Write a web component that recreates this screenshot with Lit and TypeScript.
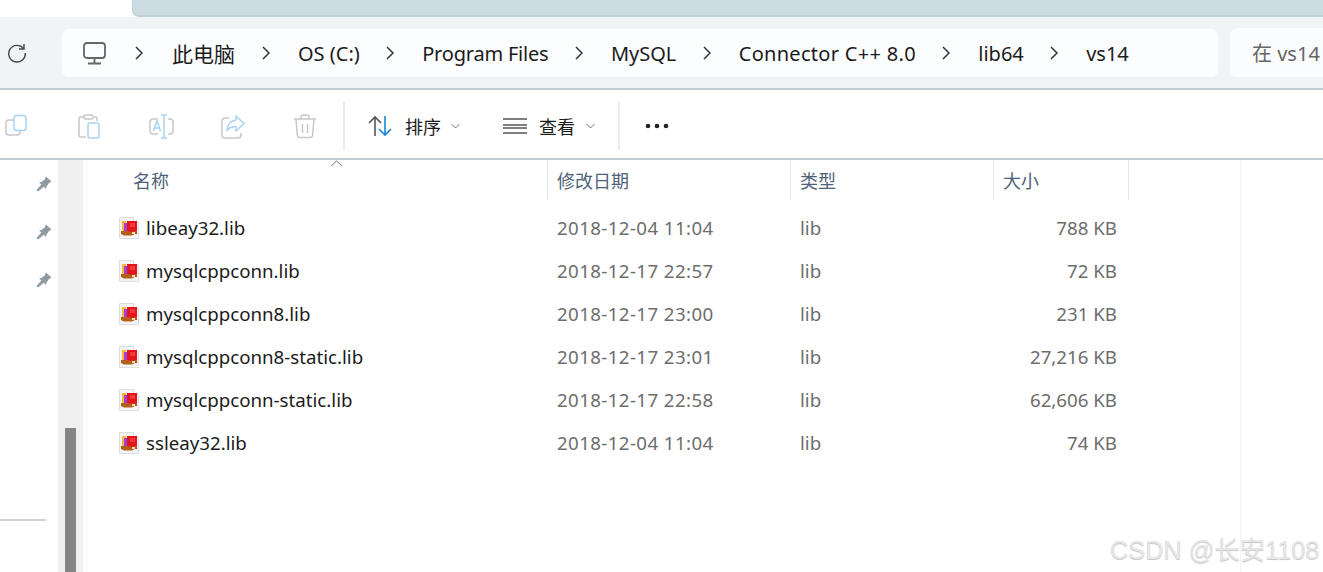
import { LitElement, html, css, svg } from "lit";
import { customElement } from "lit/decorators.js";

const FILES = [
  ["libeay32.lib", "2018-12-04 11:04", "788 KB"],
  ["mysqlcppconn.lib", "2018-12-17 22:57", "72 KB"],
  ["mysqlcppconn8.lib", "2018-12-17 23:00", "231 KB"],
  ["mysqlcppconn8-static.lib", "2018-12-17 23:01", "27,216 KB"],
  ["mysqlcppconn-static.lib", "2018-12-17 22:58", "62,606 KB"],
  ["ssleay32.lib", "2018-12-04 11:04", "74 KB"],
];

// second value is a class that evens out the text width against the original font
const CRUMBS = [
  ["此电脑", "cjk"],
  ["OS (C:)", ""],
  ["Program Files", "tight"],
  ["MySQL", ""],
  ["Connector C++ 8.0", "wide"],
  ["lib64", ""],
  ["vs14", ""],
];

const chevron = html`<svg class="chev" width="8" height="14" viewBox="0 0 8 14"><path d="M1 1l6 6-6 6" fill="none" stroke="#333" stroke-width="1.5"/></svg>`;
const caret = html`<svg class="caret" width="9" height="6" viewBox="0 0 9 6"><path d="M.5 1l4 4 4-4" fill="none" stroke="#777" stroke-width="1"/></svg>`;
const pin = html`<svg class="pin" width="16" height="16" viewBox="0 0 16 16"><path d="M10 .5l5.500 5-2.500 1.500-2.500 3.500-.5 2.500-2.200-2.300L2 15.500l-1.500-1.500 4.800-5.500L3 6.500 5.500 6 8.500 3.500z" fill="#8f9ba2"/></svg>`;

const fileIcon = html`<svg class="file" width="22" height="24" viewBox="0 0 22 24">
  <path d="M1.500 1.500h14l5 5v16h-19z" fill="#f4f4f4" stroke="#dedede"/>
  <path d="M15.500 1.500v5h5" fill="#fff" stroke="#dedede"/>
  <rect x="4" y="5" width="4" height="13" fill="#f5b83a"/>
  <rect x="6" y="7" width="4" height="11" fill="#a23fd6"/>
  <rect x="9" y="5" width="10" height="13" fill="#e5141c"/>
  <rect x="12" y="7" width="5" height="4" fill="#f2393c"/>
  <path d="M3 15h7l3 1 6-1v2l-5 2.500H6l-3-1.500z" fill="#b5601a"/>
  <rect x="14" y="16" width="3" height="2" fill="#f2e2b0"/>
</svg>`;

const grey = "#c8c8c8";
const blue = "#a9d3f3";
const toolIcons = [
  svg`<rect x="1" y="6" width="14" height="15" rx="3" fill="none" stroke="${grey}" stroke-width="1.500"/><rect x="9" y="1.500" width="12" height="15" rx="3" fill="#fff" stroke="${blue}" stroke-width="1.500"/>`,
  svg`<path d="M7 3H4a2 2 0 0 0-2 2v16a2 2 0 0 0 2 2h5M17 3h1a2 2 0 0 1 2 2v2" fill="none" stroke="${grey}" stroke-width="1.500"/><rect x="7" y="1" width="9" height="4" rx="1.500" fill="none" stroke="${grey}" stroke-width="1.500"/><rect x="11" y="9" width="11" height="15" rx="2" fill="#fff" stroke="${blue}" stroke-width="1.500"/>`,
  svg`<path d="M9 5H4a3 3 0 0 0-3 3v9a3 3 0 0 0 3 3h5M19 5h2a3 3 0 0 1 3 3v9a3 3 0 0 1-3 3h-2" fill="none" stroke="${grey}" stroke-width="1.500"/><path d="M15 1v23M18 1h-6M18 24h-6M4.500 17l3.500-10 3.500 10M5.500 14h5" fill="none" stroke="${blue}" stroke-width="1.500"/>`,
  svg`<path d="M8 4H4a3 3 0 0 0-3 3v14a3 3 0 0 0 3 3h13a3 3 0 0 0 3-3v-2" fill="none" stroke="${grey}" stroke-width="1.500"/><path d="M15 2l8 7.500-8 7.500v-4.500c-4 0-7 1-9 4 .5-6 4-10 9-10.500z" fill="none" stroke="${blue}" stroke-width="1.500" stroke-linejoin="round"/>`,
  svg`<path d="M1 5h22M8 5V3a2 2 0 0 1 2-2h4a2 2 0 0 1 2 2v2M3 5l1.500 17a2 2 0 0 0 2 1.500h11a2 2 0 0 0 2-1.500L21 5M9.500 10v9M14.500 10v9" fill="none" stroke="${grey}" stroke-width="1.500"/>`,
];

@customElement("app-root")
export class AppRoot extends LitElement {
  static styles = css`
    :host {
      display: block;
      position: relative;
      width: 1323px;
      height: 572px;
      overflow: hidden;
      background: #fff;
      font-family: "Noto Sans", "Noto Sans CJK SC", sans-serif;
      color: #1b1b1b;
    }
    .tabstrip {
      height: 15px;
      margin-left: 132px;
      background: #cddce3;
      border-bottom: 2px solid #bfd0d6;
      border-left: 1px solid #bfd0d6;
      border-bottom-left-radius: 7px;
    }
    .navbar {
      height: 73px;
      box-sizing: border-box;
      background: #f0f4f7;
      border-bottom: 2px solid #bfcdd0;
      display: flex;
      align-items: flex-start;
      padding-top: 12px;
    }
    .refresh {
      width: 62px;
      flex: none;
      height: 48px;
      padding-left: 7px;
      box-sizing: border-box;
      display: flex;
      align-items: center;
    }
    .address {
      width: 1156px;
      height: 48px;
      flex: none;
      box-sizing: border-box;
      background: #fbfdfe;
      border-radius: 7px;
      display: flex;
      align-items: center;
      padding-left: 21px;
      font-size: 20px;
      white-space: nowrap;
    }
    .address .monitor {
      margin-right: 29px;
    }
    .spacer {
      width: 29px;
      flex: none;
    }
    .crumb {
      display: flex;
      align-items: center;
    }
    .crumb .chev {
      margin: 0 28px 0 26.4px;
    }
    .crumb .cjk {
      font-size: 21px;
      margin-right: 0.6px;
    }
    .crumb .tight {
      letter-spacing: -0.2px;
    }
    .crumb .wide {
      letter-spacing: 0.3px;
    }
    .search {
      margin-left: 12px;
      flex: 1;
      height: 49px;
      margin-top: -1px;
      background: #fafcfd;
      border-radius: 7px 0 0 7px;
      display: flex;
      align-items: center;
      padding-left: 22px;
      font-size: 20px;
      color: #666;
      white-space: nowrap;
    }
    .toolbar {
      height: 70px;
      box-sizing: border-box;
      background: #fff;
      border-bottom: 2px solid #bfcdd0;
      display: flex;
      align-items: center;
      padding: 4px 0 0 5px;
      font-size: 18px;
    }
    .tool {
      width: 25px;
      height: 25px;
      margin-right: 47px;
      flex: none;
    }
    .sep {
      width: 2px;
      height: 48px;
      background: #ececec;
      flex: none;
    }
    .sep.first {
      margin-left: -22px;
    }
    .sep.last {
      margin-left: 23px;
    }
    .sort {
      display: flex;
      align-items: center;
    }
    .sort.by {
      margin-left: 23px;
    }
    .sort.view {
      margin-left: 43px;
    }
    .sort .label {
      margin: 0 10px 0 12px;
    }
    .sort.view .label {
      margin-left: 11px;
      margin-right: 11px;
    }
    .dots {
      margin-left: 25px;
    }
    .body {
      display: flex;
      height: 412px;
    }
    .side {
      width: 58px;
      flex: none;
      position: relative;
      display: flex;
      flex-direction: column;
      align-items: flex-end;
      gap: 32px;
      padding: 16px 6px 0 0;
      box-sizing: border-box;
    }
    .side .rule {
      position: absolute;
      left: 0;
      right: 12px;
      top: 359px;
      height: 2px;
      background: #d2d2d2;
    }
    .track {
      width: 25px;
      flex: none;
      background: #f0f0f0;
      padding: 268px 7px 0;
      box-sizing: border-box;
    }
    .thumb {
      height: 144px;
      background: #858585;
      width: 11px;
    }
    .list {
      width: 1155px;
      margin-left: 3px;
      flex: none;
      box-sizing: border-box;
      border-left: 1px solid #f5f5f5;
      border-right: 1px solid #f3f3f3;
      position: relative;
    }
    .row {
      display: grid;
      grid-template-columns: 460px 243px 203px 136px;
    }
    .head {
      height: 40px;
      align-items: stretch;
      font-size: 18px;
      color: #4d6278;
    }
    .head > div {
      display: flex;
      align-items: center;
      padding-left: 9px;
      border-left: 1px solid #e3e5e6;
    }
    .head > div:first-child {
      padding-left: 46px;
      border-left: none;
      position: relative;
    }
    .head > div:last-child {
      border-right: 1px solid #e3e5e6;
    }
    .sortcaret {
      position: absolute;
      left: 243px;
      top: 0;
    }
    .rows {
      padding-top: 6px;
    }
    .file-row {
      height: 43px;
      align-items: center;
      font-size: 18.7px;
      color: #6d6d6d;
    }
    .file-row > div {
      padding-left: 10px;
      white-space: nowrap;
    }
    .file-row .date {
      letter-spacing: 0.4px;
    }
    .file-row .name {
      padding-left: 31px;
      display: flex;
      align-items: center;
      gap: 6px;
      color: #1b1b1b;
    }
    .file-row .size {
      text-align: right;
      padding: 0 12px 0 0;
    }
    .mark {
      position: absolute;
      left: 1110px;
      top: 532px;
      font-family: "Liberation Sans", "Noto Sans CJK SC", sans-serif;
      font-size: 25.3px;
      line-height: 36px;
      color: #e6e6e6;
      text-shadow: 0 1px 1px #c4c4c4;
      white-space: nowrap;
    }
  `;

  render() {
    return html`
      <div class="tabstrip"></div>
      <div class="navbar">
        <div class="refresh">
          <svg width="20" height="20" viewBox="0 0 20 20"><path d="M16.500 5.500A8.300 8.300 0 1 0 18.300 10" fill="none" stroke="#444" stroke-width="1.400"/><path d="M17 1v5h-5" fill="none" stroke="#444" stroke-width="1.400"/></svg>
        </div>
        <div class="address">
          <svg class="monitor" width="23" height="23" viewBox="0 0 23 23"><rect x="1" y="1" width="21" height="15" rx="3" fill="none" stroke="#666" stroke-width="1.800"/><path d="M11.500 16v5M5 21.500h13" fill="none" stroke="#666" stroke-width="1.800"/></svg>
          ${chevron}<span class="spacer"></span>
          ${CRUMBS.map(
            ([text, cls], i) => html`<div class="crumb"><span class=${cls}>${text}</span>${i < CRUMBS.length - 1 ? chevron : ""}</div>`,
          )}
        </div>
        <div class="search">在 vs14</div>
      </div>
      <div class="toolbar">
        ${toolIcons.map((icon) => html`<svg class="tool" viewBox="0 0 25 25">${icon}</svg>`)}
        <div class="sep first"></div>
        <div class="sort by">
          <svg width="25" height="22" viewBox="0 0 25 22"><path d="M7 21V2M1 8l6-6 6 6" fill="none" stroke="#555" stroke-width="1.600"/><path d="M17 1v19M11 14l6 6 6-6" fill="none" stroke="#1a86d9" stroke-width="1.600"/></svg>
          <span class="label">排序</span>${caret}
        </div>
        <div class="sort view">
          <svg width="25" height="18" viewBox="0 0 25 18"><path d="M0 2h24M0 8h24M0 11h24M0 16h24" fill="none" stroke="#555" stroke-width="1.400"/></svg>
          <span class="label">查看</span>${caret}
        </div>
        <div class="sep last"></div>
        <svg class="dots" width="24" height="6" viewBox="0 0 24 6"><circle cx="3" cy="3" r="2.300" fill="#222"/><circle cx="12" cy="3" r="2.300" fill="#222"/><circle cx="21" cy="3" r="2.300" fill="#222"/></svg>
      </div>
      <div class="body">
        <div class="side">
          ${pin}${pin}${pin}
          <div class="rule"></div>
        </div>
        <div class="track"><div class="thumb"></div></div>
        <div class="list">
          <div class="row head">
            <div>
              名称
              <svg class="sortcaret" width="13" height="7" viewBox="0 0 13 7"><path d="M1 6l5.500-5 5.500 5" fill="none" stroke="#777" stroke-width="1"/></svg>
            </div>
            <div>修改日期</div>
            <div>类型</div>
            <div>大小</div>
          </div>
          <div class="rows">
            ${FILES.map(
              ([name, date, size]) => html`
                <div class="row file-row">
                  <div class="name">${fileIcon}<span>${name}</span></div>
                  <div class="date">${date}</div>
                  <div>lib</div>
                  <div class="size">${size}</div>
                </div>
              `,
            )}
          </div>
        </div>
      </div>
      <div class="mark">CSDN @长安1108</div>
    `;
  }
}
